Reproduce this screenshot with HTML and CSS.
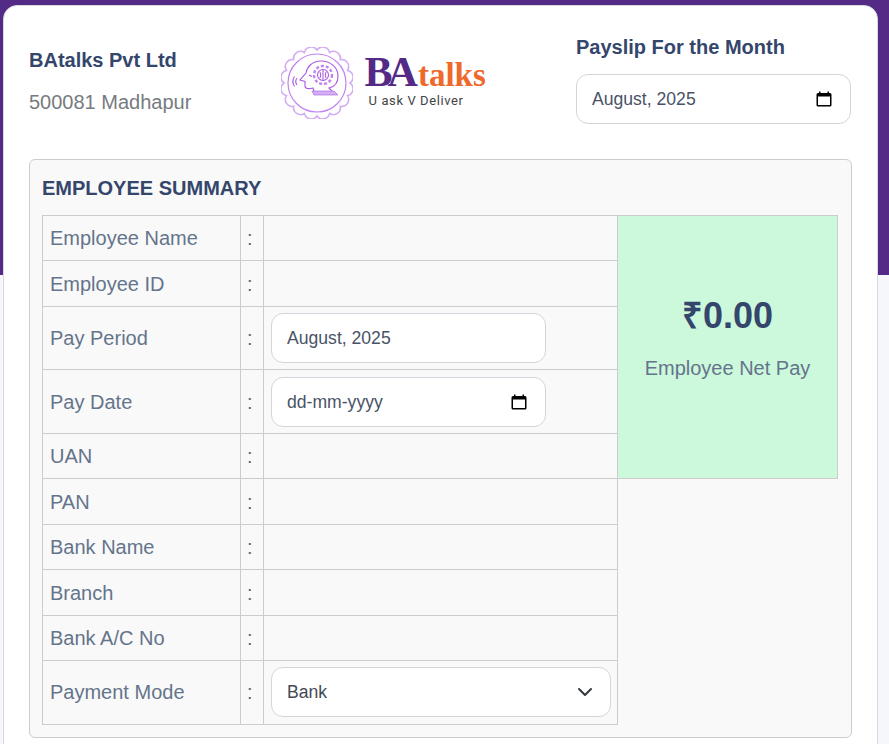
FILE: index.html
```html
<!DOCTYPE html>
<html lang="en">
<head>
  <meta charset="UTF-8">
  <title>Payslip | BAtalks</title>
  <link rel="stylesheet" href="styles.css">
</head>
<body>
  <div class="band"></div>

  <div class="card">
    <div class="top">
      <div class="company">
        <h2>BAtalks Pvt Ltd</h2>
        <p>500081 Madhapur</p>
      </div>

      <div class="logo">
        <svg class="emblem" width="72" height="72" viewBox="0 0 72 72" fill="none">
          <path class="hatch" d="M69 36A7 7 0 0 1 66.5 48.6A7 7 0 0 1 59.3 59.3A7 7 0 0 1 48.6 66.5A7 7 0 0 1 36 69A7 7 0 0 1 23.4 66.5A7 7 0 0 1 12.7 59.3A7 7 0 0 1 5.5 48.6A7 7 0 0 1 3 36A7 7 0 0 1 5.5 23.4A7 7 0 0 1 12.7 12.7A7 7 0 0 1 23.4 5.5A7 7 0 0 1 36 3A7 7 0 0 1 48.6 5.5A7 7 0 0 1 59.3 12.7A7 7 0 0 1 66.5 23.4A7 7 0 0 1 69 36Z"/>
          <circle class="ring" cx="36" cy="36" r="29"/>
          <path class="line" d="M57 29C57 20 49 14 40 14C31 14 26 20 25 26L19 33L24 34.5L24 39C24 42 28 42 32 41L33 44"/>
          <path class="line" d="M57 29C57 36 53 40 48 41L51 44"/>
          <path class="base" d="M31 44H53L57 48H33Z"/>
          <circle class="gear" cx="42" cy="28" r="9"/>
          <circle class="line" cx="42" cy="28" r="5.5"/>
          <path class="line" d="M42 22.5V33.5M39 25C40 27 40 29 39 31M45 25C44 27 44 29 45 31"/>
          <path class="line" d="M16 31C14.5 33 14.5 36 16 38M13.5 29.5C11.5 32.500 11.500 36.500 13.500 39.500"/>
          <path class="line" d="M28 28L31 29.500"/>
        </svg>
        <div class="wordmark">
          <div class="name"><span class="ba">BA</span><span class="talks">talks</span></div>
          <div class="tag">U ask V Deliver</div>
        </div>
      </div>

      <div class="month">
        <h3>Payslip For the Month</h3>
        <div class="field">
          <span>August, 2025</span>
          <svg class="cal" width="18" height="18" viewBox="0 0 18 18"><path d="M4 1.500H5.500V3H12.500V1.500H14V3H15A1.500 1.500 0 0 1 16.500 4.500V15A1.500 1.500 0 0 1 15 16.500H3A1.500 1.500 0 0 1 1.500 15V4.500A1.500 1.500 0 0 1 3 3H4ZM3 6.500V15H15V6.500Z"/></svg>
        </div>
      </div>
    </div>

    <div class="summary">
      <h4>EMPLOYEE SUMMARY</h4>
      <table>
        <tr>
          <td class="label">Employee Name</td><td class="sep">:</td><td class="val"></td>
          <td class="net" rowspan="5">
            <div class="amount">₹0.00</div>
            <div class="net-label">Employee Net Pay</div>
          </td>
        </tr>
        <tr><td class="label">Employee ID</td><td class="sep">:</td><td class="val"></td></tr>
        <tr>
          <td class="label">Pay Period</td><td class="sep">:</td>
          <td class="val"><div class="field short"><span>August, 2025</span></div></td>
        </tr>
        <tr>
          <td class="label">Pay Date</td><td class="sep">:</td>
          <td class="val">
            <div class="field short">
              <span>dd-mm-yyyy</span>
              <svg class="cal" width="18" height="18" viewBox="0 0 18 18"><path d="M4 1.500H5.500V3H12.500V1.500H14V3H15A1.500 1.500 0 0 1 16.500 4.500V15A1.500 1.500 0 0 1 15 16.500H3A1.500 1.500 0 0 1 1.500 15V4.500A1.500 1.500 0 0 1 3 3H4ZM3 6.500V15H15V6.500Z"/></svg>
            </div>
          </td>
        </tr>
        <tr><td class="label">UAN</td><td class="sep">:</td><td class="val"></td></tr>
        <tr><td class="label">PAN</td><td class="sep">:</td><td class="val"></td></tr>
        <tr><td class="label">Bank Name</td><td class="sep">:</td><td class="val"></td></tr>
        <tr><td class="label">Branch</td><td class="sep">:</td><td class="val"></td></tr>
        <tr><td class="label">Bank A/C No</td><td class="sep">:</td><td class="val"></td></tr>
        <tr>
          <td class="label">Payment Mode</td><td class="sep">:</td>
          <td class="val">
            <div class="field select">
              <span>Bank</span>
              <svg width="16" height="16" viewBox="0 0 16 16" fill="none"><path d="M2 5L8 11L14 5" stroke="#343a40" stroke-width="2" stroke-linecap="round" stroke-linejoin="round"/></svg>
            </div>
          </td>
        </tr>
      </table>
    </div>
  </div>
</body>
</html>
```

FILE: styles.css
```css
html, body {
  height: 100%;
  overflow: hidden;
}
body {
  margin: 0;
  background: #f6f7fb;
  font-family: "Liberation Sans", Arial, sans-serif;
  color: #34466b;
}
.band {
  position: absolute;
  top: 0;
  left: 0;
  right: 0;
  height: 275px;
  background: #542a87;
}
.card {
  position: relative;
  margin: 5px 11px 0 3px;
  padding: 0 25px 20px;
  background: white;
  border: 1px solid #d8d8e0;
  border-radius: 14px;
}

.top {
  display: flex;
  justify-content: space-between;
  height: 153px;
}
.company {
  padding-top: 41px;
}
.company h2 {
  margin: 0;
  font-size: 20px;
  line-height: 26px;
  color: #34466b;
}
.company p {
  margin: 16px 0 0;
  font-size: 20px;
  line-height: 26px;
  color: #767b80;
}

.logo {
  display: flex;
  align-items: flex-start;
  gap: 12px;
  padding-top: 41px;
  margin-left: -1px;
}
.hatch {
  stroke: #d4aef4;
  stroke-width: 1.6;
}
.ring {
  stroke: #c283f0;
  stroke-width: 1.2;
}
.line {
  stroke: #a95be0;
  stroke-width: 1.1;
  fill: none;
}
.gear {
  stroke: #c283f0;
  stroke-width: 2.4;
  stroke-dasharray: 3 2;
}
.base {
  fill: #d4aef4;
  stroke: #a95be0;
  stroke-width: 0.6;
}
.wordmark {
  padding-top: 2px;
}
.name {
  font-family: "Liberation Serif", serif;
  font-weight: bold;
  line-height: 46px;
  height: 46px;
}
.ba {
  font-size: 42px;
  letter-spacing: -5px;
  color: #542a87;
}
.talks {
  margin-left: 5px;
  font-size: 33px;
  color: #ee6a2c;
}
.tag {
  margin: -1px 0 0 4px;
  font-family: Roboto, sans-serif;
  font-weight: 400;
  font-size: 13px;
  line-height: 14px;
  letter-spacing: 0.6px;
  color: #444;
}

.month {
  width: 275px;
  margin-right: 1px;
  padding-top: 28px;
}
.month h3 {
  margin: 0 0 14px;
  font-size: 20px;
  line-height: 26px;
  color: #34466b;
}

.field {
  box-sizing: border-box;
  display: flex;
  align-items: center;
  justify-content: space-between;
  height: 50px;
  padding: 0 15px;
  background: white;
  border: 1px solid #d4d4dc;
  border-radius: 12px;
  font-size: 17.6px;
  color: #495366;
}
.field svg {
  margin-right: 2px;
}
.field.short {
  width: 275px;
}
.field.select {
  width: 340px;
  color: #444a55;
}
.cal {
  fill: #000;
}

.summary {
  padding: 13px 13px 12px 12px;
  background: #f9f9f9;
  border: 1px solid #ccc;
  border-radius: 6px;
}
.summary h4 {
  margin: 0 0 12px;
  font-size: 20px;
  line-height: 30px;
  color: #34466b;
}
table {
  border-collapse: collapse;
  width: 796px;
  table-layout: fixed;
  font-size: 20px;
  line-height: 32px;
}
td {
  border: 1px solid #ccc;
  padding: 6.24px 7px;
  color: #64748b;
}
.label {
  width: 183px;
}
.sep {
  width: 9px;
  padding-left: 6px;
  color: #666;
}
.val {
  width: 339px;
}
.net {
  width: 205px;
  padding-bottom: 24px;
  background: #ccf8dc;
  text-align: center;
}
.amount {
  font-size: 36px;
  line-height: 44px;
  font-weight: bold;
  color: #34466b;
}
.net-label {
  margin-top: 16px;
  font-size: 20px;
  line-height: 28px;
}
```
